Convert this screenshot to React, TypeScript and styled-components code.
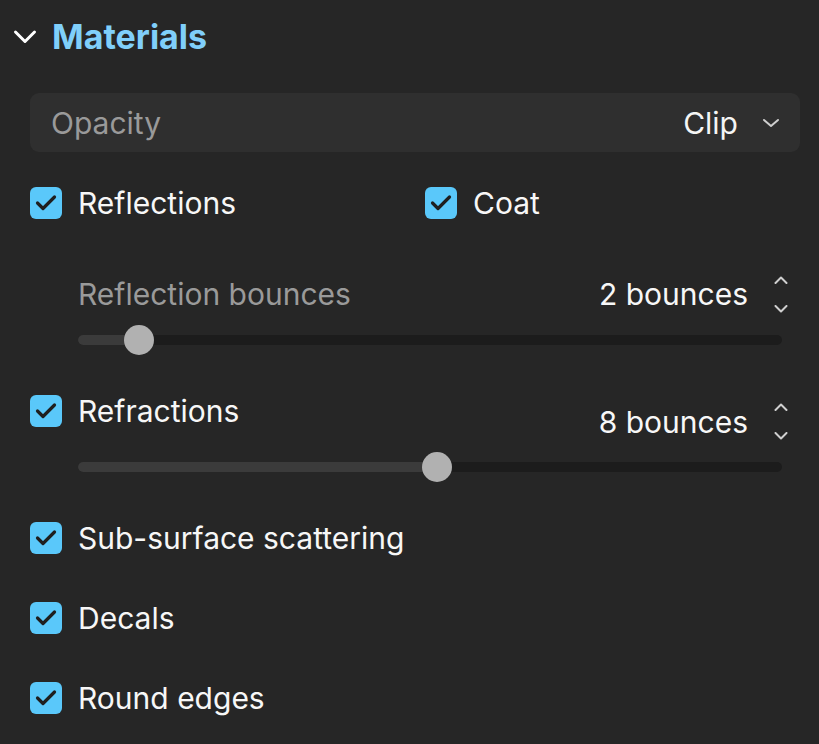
import React from "react";
import styled, { createGlobalStyle } from "styled-components";

const Global = createGlobalStyle`
  html, body { margin: 0; padding: 0; background: #262626; }
  body { font-family: Inter, "Noto Sans", sans-serif; -webkit-font-smoothing: antialiased; }
`;

const Panel = styled.div`
  width: 819px;
  height: 744px;
  box-sizing: border-box;
  padding: 0 19px 0 30px;
  background: #262626;
  color: #f5f5f5;
  display: flex;
  flex-direction: column;
  overflow: hidden;
`;

const Header = styled.div`
  height: 74px;
  margin-left: -17px;
  display: flex;
  align-items: center;
  gap: 15px;
`;

const Title = styled.h2`
  margin: 0;
  font-size: 34px;
  line-height: 40px;
  font-weight: 700;
  color: #80cffa;
`;

const SelectBox = styled.div`
  margin-top: 19px;
  height: 59px;
  border-radius: 9px;
  background: #2f2f2f;
  display: flex;
  align-items: center;
  padding: 0 20px 0 21px;
  font-size: 30px;
`;

const SelectLabel = styled.span`
  flex: 1;
  color: #9a9a9a;
`;

const SelectValue = styled.span`
  color: #f5f5f5;
  margin-right: 24px;
`;

const CheckRow = styled.div<{ $mt: number }>`
  margin-top: ${(p) => p.$mt}px;
  display: flex;
  align-items: flex-start;
`;

const CheckItem = styled.label<{ $width?: number }>`
  display: flex;
  align-items: center;
  gap: 16px;
  height: 32px;
  font-size: 30px;
  line-height: 32px;
  color: #f7f7f7;
  ${(p) => (p.$width ? `width: ${p.$width}px;` : "")}
`;

const Box = styled.span`
  width: 32px;
  height: 32px;
  border-radius: 6px;
  background: #5ac8fa;
  display: flex;
  align-items: center;
  justify-content: center;
  flex-shrink: 0;
`;

const SubRow = styled.div<{ $mt: number }>`
  margin-top: ${(p) => p.$mt}px;
  padding-left: 48px;
  padding-right: 12px;
  display: flex;
  align-items: center;
  height: 36px;
`;

const SubLabel = styled.span`
  flex: 1;
  font-size: 30px;
  color: #9a9a9a;
`;

const ValueGroup = styled.div<{ $mt?: number; $mr?: number }>`
  margin-left: auto;
  margin-top: ${(p) => p.$mt ?? 0}px;
  margin-right: ${(p) => p.$mr ?? 0}px;
  display: flex;
  align-items: center;
  gap: 26px;
  height: 37px;
`;

const Value = styled.span`
  font-size: 30px;
  color: #f7f7f7;
`;

const Stepper = styled.div`
  display: flex;
  flex-direction: column;
  justify-content: space-between;
  height: 37px;
  width: 14px;
`;

const SliderWrap = styled.div<{ $mt: number }>`
  margin-top: ${(p) => p.$mt}px;
  margin-left: 48px;
  margin-right: 18px;
  height: 30px;
  position: relative;
  display: flex;
  align-items: center;
`;

const Track = styled.div`
  width: 100%;
  height: 10px;
  border-radius: 5px;
  background: #1c1c1c;
  overflow: hidden;
`;

const Fill = styled.div`
  height: 100%;
  background: #3b3b3b;
`;

const Thumb = styled.div`
  position: absolute;
  top: 0;
  width: 30px;
  height: 30px;
  border-radius: 50%;
  background: #b1b1b1;
  transform: translateX(-50%);
`;

const List = styled.div`
  margin-top: 40px;
  display: flex;
  flex-direction: column;
  gap: 48px;
`;

const Check = () => (
  <Box>
    <svg width="32" height="32" viewBox="0 0 32 32">
      <path d="M7.5 16 L13 21.5 L24.5 10" fill="none" stroke="#1f1f1f" strokeWidth="3.2" strokeLinecap="round" strokeLinejoin="round" />
    </svg>
  </Box>
);

const StepperIcon = () => (
  <Stepper>
    <svg width="14" height="8" viewBox="0 0 14 8">
      <path d="M1.5 7 L7 1.5 L12.5 7" fill="none" stroke="#cfcfcf" strokeWidth="2" strokeLinecap="round" strokeLinejoin="round" />
    </svg>
    <svg width="14" height="8" viewBox="0 0 14 8">
      <path d="M1.5 1 L7 6.5 L12.5 1" fill="none" stroke="#cfcfcf" strokeWidth="2" strokeLinecap="round" strokeLinejoin="round" />
    </svg>
  </Stepper>
);

const Slider = ({ pos, mt }: { pos: number; mt: number }) => (
  <SliderWrap $mt={mt}>
    <Track>
      <Fill style={{ width: `${pos}px` }} />
    </Track>
    <Thumb style={{ left: `${pos}px` }} />
  </SliderWrap>
);

export default function App() {
  return (
    <>
      <Global />
      <Panel>
        <Header>
          <svg width="24" height="16" viewBox="0 0 24 16">
            <path d="M2.5 3 L12 12.5 L21.5 3" fill="none" stroke="#ffffff" strokeWidth="3" strokeLinecap="round" strokeLinejoin="round" />
          </svg>
          <Title>Materials</Title>
        </Header>

        <SelectBox>
          <SelectLabel>Opacity</SelectLabel>
          <SelectValue>Clip</SelectValue>
          <svg width="18" height="10" viewBox="0 0 18 10">
            <path d="M2 2 L9 8 L16 2" fill="none" stroke="#cfcfcf" strokeWidth="2" strokeLinecap="round" strokeLinejoin="round" />
          </svg>
        </SelectBox>

        <CheckRow $mt={35}>
          <CheckItem $width={395}>
            <Check />
            Reflections
          </CheckItem>
          <CheckItem>
            <Check />
            Coat
          </CheckItem>
        </CheckRow>

        <SubRow $mt={57}>
          <SubLabel>Reflection bounces</SubLabel>
          <ValueGroup>
            <Value>2 bounces</Value>
            <StepperIcon />
          </ValueGroup>
        </SubRow>
        <Slider pos={61} mt={13} />

        <CheckRow $mt={40}>
          <CheckItem>
            <Check />
            Refractions
          </CheckItem>
          <ValueGroup $mt={8} $mr={12}>
            <Value>8 bounces</Value>
            <StepperIcon />
          </ValueGroup>
        </CheckRow>
        <Slider pos={359} mt={12} />

        <List>
          <CheckItem>
            <Check />
            Sub-surface scattering
          </CheckItem>
          <CheckItem>
            <Check />
            Decals
          </CheckItem>
          <CheckItem>
            <Check />
            Round edges
          </CheckItem>
        </List>
      </Panel>
    </>
  );
}
